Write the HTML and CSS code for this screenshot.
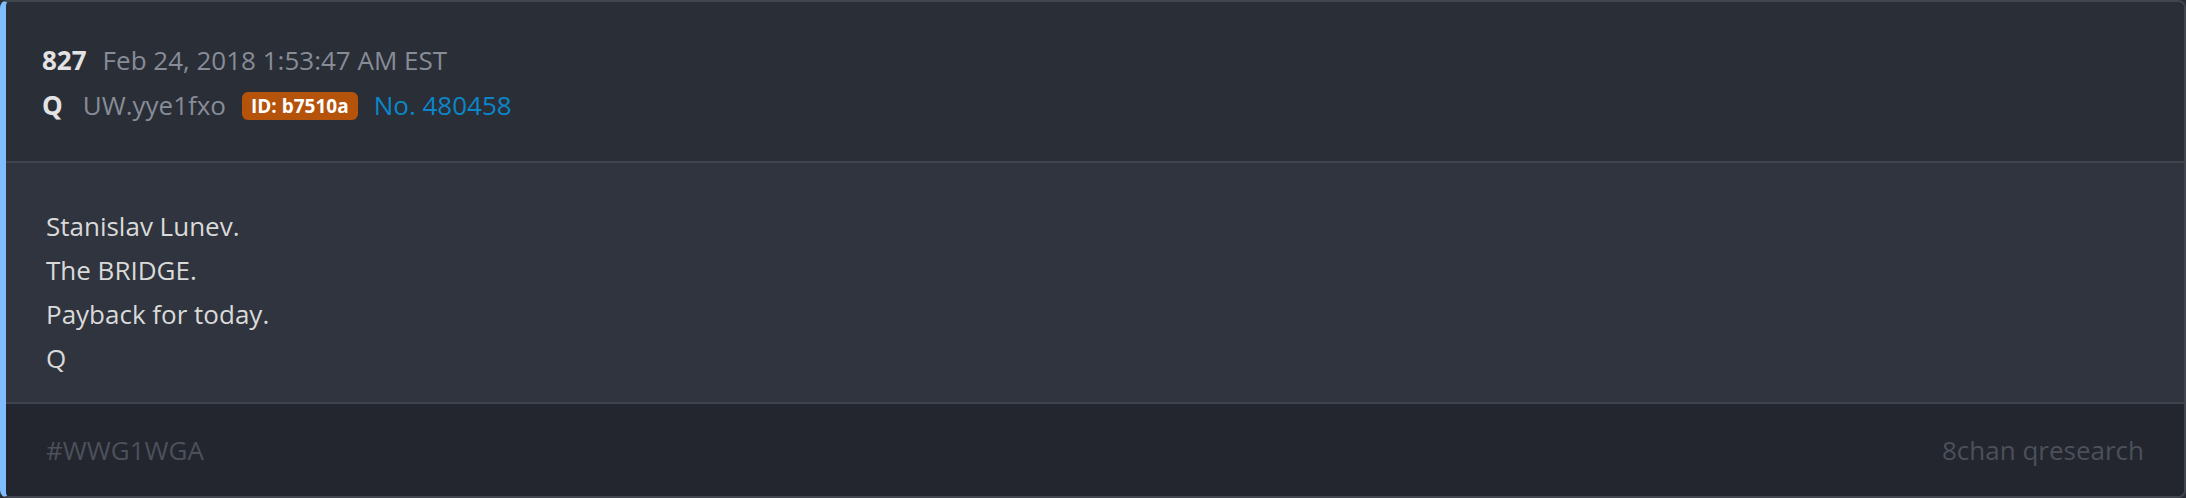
FILE: index.html
```html
<!DOCTYPE html>
<html lang="en">
<head>
<meta charset="utf-8">
<title>Post 827</title>
<link rel="stylesheet" href="styles.css">
</head>
<body>
<article class="post">
  <header class="post-head">
    <div class="row">
      <span class="num">827</span>
      <span class="date">Feb 24, 2018 1:53:47 AM EST</span>
    </div>
    <div class="row">
      <span class="name">Q</span>
      <span class="trip">UW.yye1fxo</span>
      <span class="badge">ID: b7510a</span>
      <span class="postno">No. 480458</span>
    </div>
  </header>
  <div class="post-body">
    <div class="line">Stanislav Lunev.</div>
    <div class="line">The BRIDGE.</div>
    <div class="line">Payback for today.</div>
    <div class="line">Q</div>
  </div>
  <footer class="post-foot">
    <span class="tag">#WWG1WGA</span>
    <span class="source">8chan qresearch</span>
  </footer>
</article>
</body>
</html>
```

FILE: styles.css
```css
html, body {
  margin: 0;
  padding: 0;
  background: #2a2e37;
}
body {
  font-family: "Open Sans", "Noto Sans", sans-serif;
  font-size: 26px;
}
.post {
  box-sizing: border-box;
  width: 2186px;
  height: 498px;
  border: 2px solid #42464f;
  border-left: 6px solid #80bdff;
  border-radius: 8px;
  overflow: hidden;
  display: flex;
  flex-direction: column;
  background: #2a2e37;
}
.post-head {
  box-sizing: border-box;
  height: 161px;
  padding: 36px 36px 0 36px;
  background: #2a2e37;
  border-bottom: 2px solid #3f434d;
}
.row {
  display: flex;
  align-items: center;
  gap: 14px;
  height: 45px;
  line-height: 45px;
  white-space: nowrap;
}
.num, .name {
  font-weight: 700;
  color: #e3e3e3;
}
.num {
  margin-right: 2px;
}
.date, .trip {
  color: #878c97;
}
.name {
  margin-right: 6px;
}
.badge {
  display: inline-block;
  height: 28px;
  line-height: 28px;
  padding: 0 9px;
  border-radius: 6px;
  background: #b5530b;
  color: #ffffff;
  font-weight: 700;
  font-size: 19px;
  margin-left: 2px;
}
.postno {
  color: #0b86c9;
  margin-left: 2px;
}
.post-body {
  box-sizing: border-box;
  height: 241px;
  padding: 41px 40px 0 40px;
  background: #2f343e;
  border-bottom: 2px solid #3f434d;
  color: #dadada;
}
.line {
  height: 44px;
  line-height: 44px;
}
.post-foot {
  flex: 1;
  display: flex;
  align-items: center;
  justify-content: space-between;
  padding: 0 40px;
  background: #23262e;
  color: #4b505b;
}
```
